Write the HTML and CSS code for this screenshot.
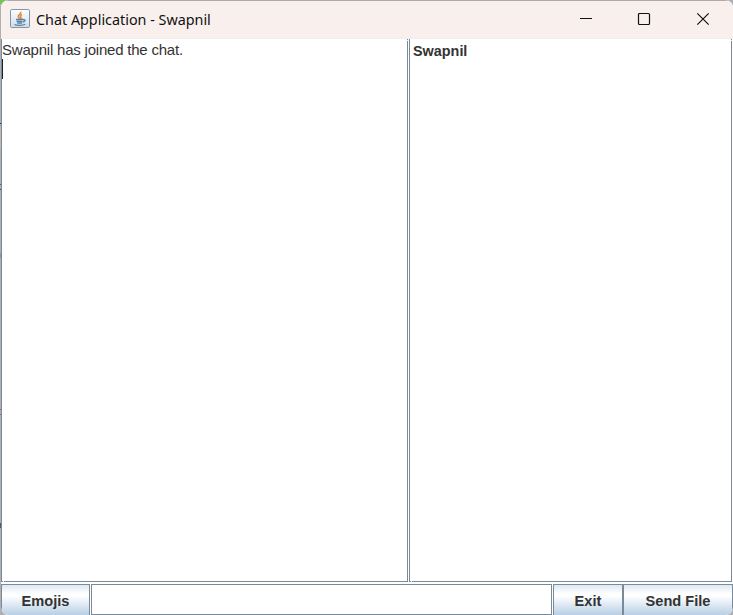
FILE: index.html
```html
<!DOCTYPE html>
<html lang="en">
<head>
<meta charset="utf-8">
<title>Chat Application - Swapnil</title>
<link rel="stylesheet" href="styles.css">
</head>
<body>
<div class="desktop">
  <main class="window">
    <header class="titlebar">
      <svg class="app-icon" viewBox="0 0 20 20">
        <defs><linearGradient id="tile" x1="0" y1="0" x2="0" y2="1"><stop offset="0" stop-color="#fff"/><stop offset="1" stop-color="#ccdce8"/></linearGradient></defs>
        <rect x=".5" y=".5" width="19" height="18" rx="1.200" fill="url(#tile)" stroke="#8195a8"/>
        <path d="M10.800 2.800c.8 2-3 2.800-2.500 4.700.2 1 1.200 1.500 1.200 2.300M12 5.600c-2 .8-2 1.700-1.200 2.500.6.700.2 1.300-.3 1.700" fill="none" stroke="#e5893f" stroke-width="1.600"/>
        <path d="M6 10.500h7.500M6.500 12.300h6M7.200 14h5M13.300 10.700c2.500-.6 2.300 1.800-.3 2.300M4.500 15.500c2 1.200 8.500 1.200 10.700-.2" fill="none" stroke="#58809e" stroke-width="1.300"/>
      </svg>
      <h1 class="title">Chat Application - Swapnil</h1>
      <div class="controls">
        <svg class="control" viewBox="0 0 14 14"><path d="M1 6.500h12"/></svg>
        <svg class="control" viewBox="0 0 14 14"><rect x="1.500" y="1.500" width="11" height="11" rx="1"/></svg>
        <svg class="control close" viewBox="0 0 14 14"><path d="M1.300 1.300l11.400 11.400M12.700 1.300L1.300 12.700"/></svg>
      </div>
    </header>
    <section class="panes">
      <div class="pane messages"><p>Swapnil has joined the chat.</p><div class="caret"></div></div>
      <div class="pane users"><p>Swapnil</p></div>
    </section>
    <footer class="toolbar">
      <button class="button">Emojis</button>
      <input class="field" type="text" aria-label="Message">
      <button class="button">Exit</button>
      <button class="button">Send File</button>
    </footer>
  </main>
</div>
</body>
</html>
```
FILE: styles.css
```css
* { box-sizing: border-box; }
body { margin: 0; font-family: "Liberation Sans", Arial, sans-serif; color: #333; overflow: hidden; }
p, h1 { margin: 0; }
.desktop {
  width: 733px; height: 615px; padding-left: 1px;
  background:
    linear-gradient(#75c45b, #75c45b) 0 0 / 6px 4px no-repeat,
    linear-gradient(#333, #333) 0 123px / 1px 1px no-repeat,
    linear-gradient(#c5b9a5, #c5b9a5) 0 127px / 1px 22px no-repeat,
    linear-gradient(#3d5eaa, #3d5eaa) 0 184px / 1px 1px no-repeat,
    linear-gradient(#4e5045, #4e5045) 0 189px / 1px 1px no-repeat,
    linear-gradient(#83a584, #83a584) 0 253px / 1px 5px no-repeat,
    linear-gradient(#a05ca8, #a05ca8) 0 409px / 1px 1px no-repeat,
    linear-gradient(#a05ca8, #a05ca8) 0 414px / 1px 1px no-repeat,
    linear-gradient(#58566a, #58566a) 0 523px / 1px 5px no-repeat,
    #aeb0b3;
}
.window {
  height: 615px; display: grid; grid-template-rows: 38px 544px 33px;
  background: #fff; border-radius: 8px; overflow: hidden;
}
.titlebar {
  display: flex; align-items: center; background: #f9f0ee;
  border-top: 1px solid #adaaaa; padding-left: 9px;
}
.app-icon { width: 20px; height: 20px; margin-top: -1px; }
.title { margin-left: 6px; font: 400 14.35px/20px "Noto Sans", sans-serif; color: #111; white-space: nowrap; }
.controls { margin: -1px 0 0 auto; display: flex; gap: 44px; padding-right: 23px; }
.control { width: 14px; height: 14px; fill: none; stroke: #111; stroke-width: 1.2; }
.close { margin-left: 1px; }
.panes { display: grid; grid-template-columns: 407px 323px; column-gap: 1px; border-top: 1px solid #eeeeee; }
.pane { position: relative; border: 1px solid #7a8a99; border-top: 0; background: #fff; }
/* one-pixel breaks in the bevelled frame */
.pane::before, .pane::after { content: ""; position: absolute; width: 1px; height: 1px; background: #eee; }
.pane::before { top: 1px; right: -1px; }
.pane::after { bottom: -1px; left: 1px; }
.messages { font-size: 15px; letter-spacing: -0.21px; line-height: 20px; padding-top: 1px; }
.caret { width: 1px; height: 20px; margin-top: -1px; background: #222; }
.users { font-size: 14.4px; font-weight: 700; line-height: 20px; padding: 2px 0 0 3px; }
.toolbar {
  display: grid; grid-template-columns: 89px 463px 70px 110px;
  padding-top: 2px; background: #fff;
}
.button {
  margin: 0; padding: 2px 0 0; border: 1px solid #7a8a99; border-bottom: 0; border-radius: 0;
  background: linear-gradient(#dde8f3 0, #fff 30%, #fff 36%, #b8cfe5 100%);
  font: 700 14.6px/20px "Liberation Sans", Arial, sans-serif; color: #333;
}
.field { margin: 0 1px; min-width: 0; border: 1px solid #7a8a99; background: #fff; outline: 0; }
```
